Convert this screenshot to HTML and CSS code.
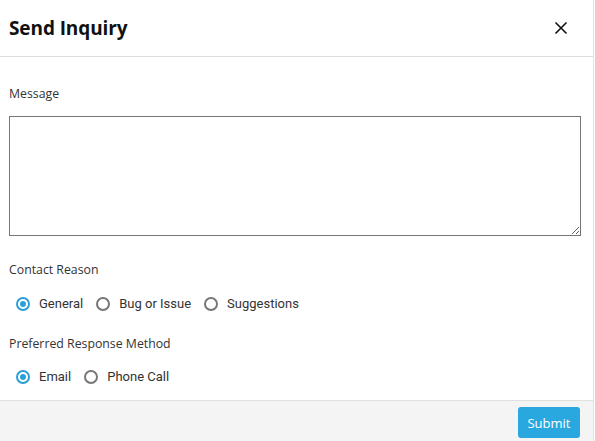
FILE: index.html
```html
<!DOCTYPE html>
<html lang="en">
<head>
<meta charset="utf-8">
<title>Send Inquiry</title>
<link rel="stylesheet" href="styles.css">
</head>
<body>
<div class="dialog">
  <header class="dlg-header">
    <h1 class="dlg-title">Send Inquiry</h1>
    <button class="dlg-close" aria-label="Close">
      <svg width="14" height="14" viewBox="0 0 14 14"><path d="M1.5 1.5 L12.5 12.5 M12.5 1.5 L1.5 12.5" stroke="#111" stroke-width="1.6" fill="none"/></svg>
    </button>
  </header>
  <main class="dlg-body">
    <label class="field-label">Message</label>
    <textarea class="msg"></textarea>
    <div class="field-label reason-label">Contact Reason</div>
    <div class="radio-row">
      <label class="radio"><span class="dot checked"></span>General</label>
      <label class="radio"><span class="dot"></span>Bug or Issue</label>
      <label class="radio"><span class="dot"></span>Suggestions</label>
    </div>
    <div class="field-label method-label">Preferred Response Method</div>
    <div class="radio-row second">
      <label class="radio"><span class="dot checked"></span>Email</label>
      <label class="radio"><span class="dot"></span>Phone Call</label>
    </div>
  </main>
  <footer class="dlg-footer">
    <button class="submit">Submit</button>
  </footer>
</div>
</body>
</html>
```
FILE: styles.css
```css
html, body {
  margin: 0;
  padding: 0;
  background: #fff;
}
.dialog {
  width: 593px;
  height: 441px;
  border-right: 1px solid #e2e2e2;
  display: flex;
  flex-direction: column;
  font-family: "Open Sans", "Noto Sans", sans-serif;
  color: #222;
}
.dlg-header {
  height: 56px;
  border-bottom: 1px solid #dedede;
  display: flex;
  align-items: center;
  justify-content: space-between;
  padding: 0 25px 0 9px;
  box-sizing: content-box;
}
.dlg-title {
  margin: 0;
  font-size: 19px;
  font-weight: 700;
  color: #111;
  letter-spacing: -0.1px;
}
.dlg-close {
  border: 0;
  background: none;
  padding: 0;
  width: 14px;
  height: 14px;
  display: flex;
}
.dlg-body {
  flex: 1;
  padding: 0 13px 0 9px;
  display: flex;
  flex-direction: column;
}
.field-label {
  font-size: 12.3px;
  line-height: 16px;
  color: #333;
  display: block;
}
.dlg-body > .field-label:first-child {
  margin-top: 29px;
}
.msg {
  margin-top: 14px;
  width: 572px;
  height: 120px;
  box-sizing: border-box;
  border: 1px solid #767676;
  border-radius: 0;
  resize: vertical;
  font: inherit;
}
.reason-label {
  margin-top: 26px;
}
.method-label {
  margin-top: 24px;
}
.radio-row {
  display: flex;
  gap: 13px;
  margin-top: 18px;
  padding-left: 7px;
}
.radio-row.second {
  margin-top: 17px;
}
.radio {
  display: flex;
  align-items: center;
  gap: 9px;
  font-family: Roboto, "Open Sans", sans-serif;
  font-size: 13px;
  line-height: 16px;
  color: #333;
}
.dot {
  width: 14px;
  height: 14px;
  box-sizing: border-box;
  border: 2px solid #777;
  border-radius: 50%;
  position: relative;
}
.dot.checked {
  border-color: #2a9fd8;
}
.dot.checked::after {
  content: "";
  position: absolute;
  left: 2px;
  top: 2px;
  width: 6px;
  height: 6px;
  border-radius: 50%;
  background: #2a9fd8;
}
.dlg-footer {
  height: 41px;
  border-top: 1px solid #e0e0e0;
  background: #f4f4f4;
  display: flex;
  align-items: flex-start;
  justify-content: flex-end;
  padding: 6px 13px 0 0;
  box-sizing: border-box;
}
.submit {
  width: 62px;
  height: 31px;
  border: 0;
  border-radius: 3px;
  background: #29a8e0;
  color: #fff;
  font-family: "Open Sans", sans-serif;
  font-size: 13px;
}
```
